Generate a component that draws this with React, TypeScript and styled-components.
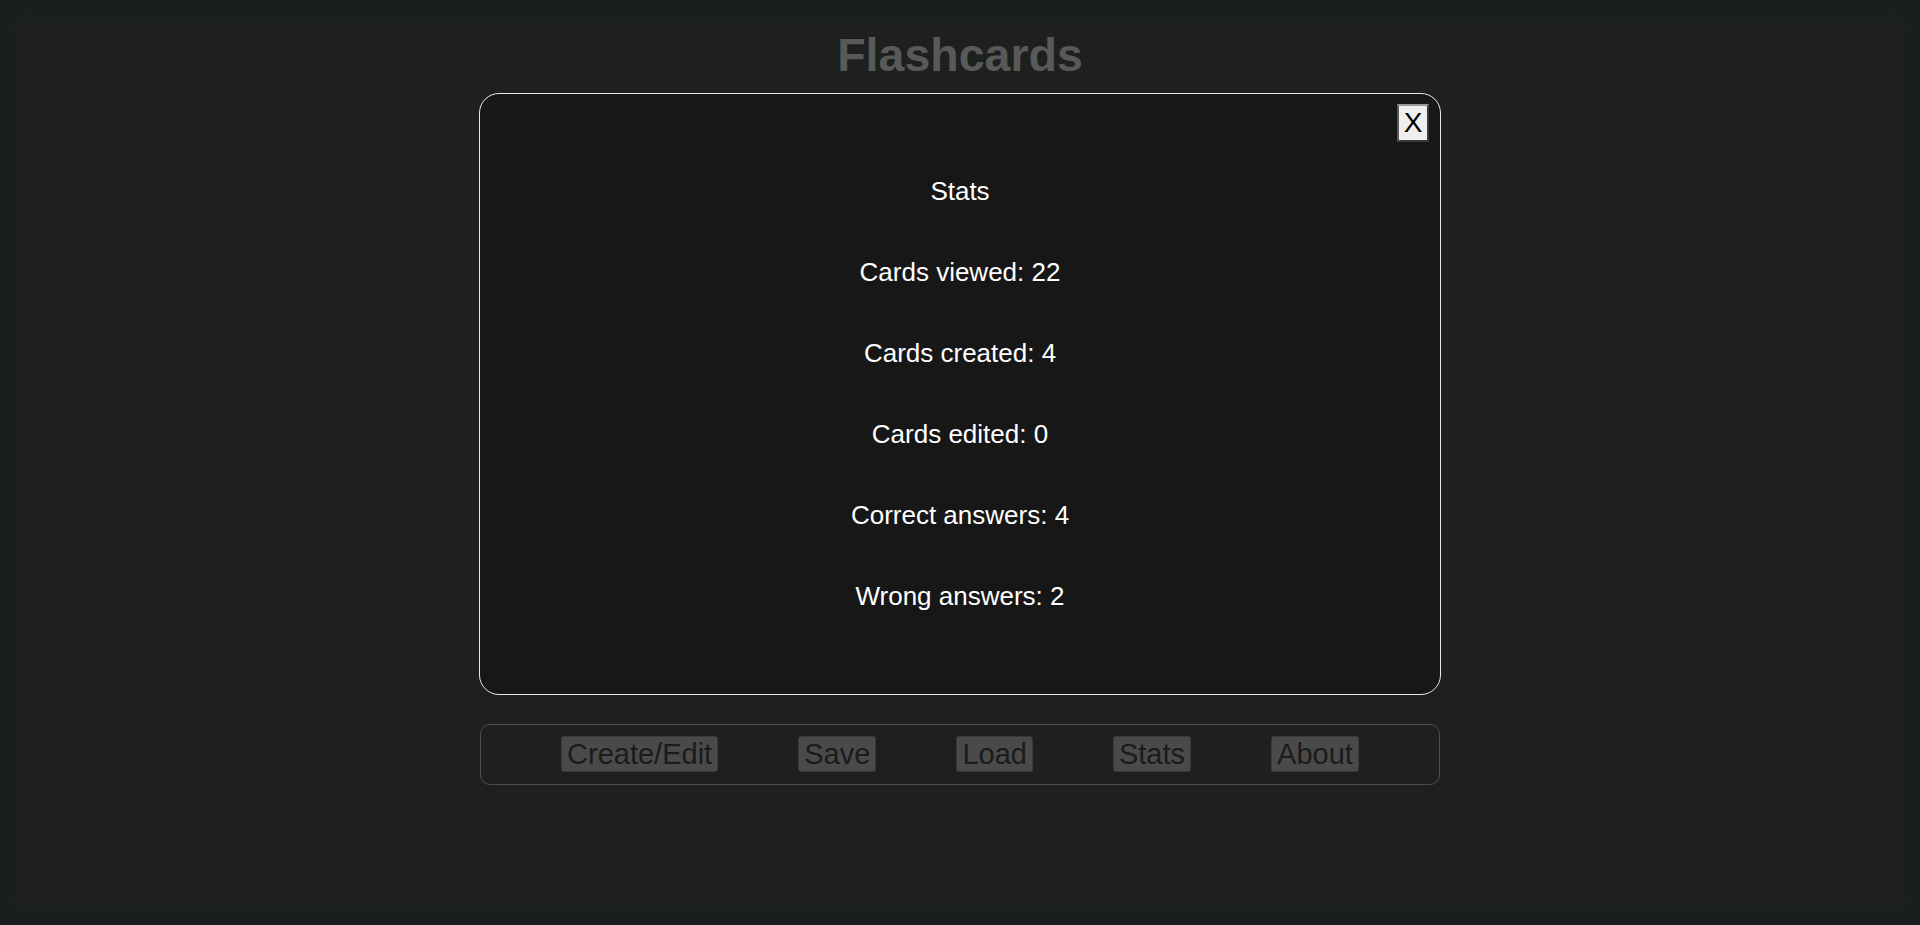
import React from "react";
import styled, { createGlobalStyle } from "styled-components";

const Global = createGlobalStyle`
  html, body { margin: 0; padding: 0; height: 100%; }
  body {
    background: #1e2020;
    font-family: "Liberation Sans", Arial, sans-serif;
    min-height: 925px;
  }
`;

const Page = styled.div`
  width: 100%;
  min-height: 925px;
  display: flex;
  flex-direction: column;
  align-items: center;
  box-shadow: inset 0 0 18px 6px #181e1e;
`;

const Title = styled.h1`
  margin: 27px 0 0;
  height: 56px;
  line-height: 56px;
  font-size: 46.5px;
  font-weight: bold;
  color: #595959;
`;

const Modal = styled.div`
  position: relative;
  box-sizing: border-box;
  width: 962px;
  margin-top: 10px;
  padding: 57px 0 57px;
  background: #171717;
  border: 1px solid #e8e8e8;
  border-radius: 20px;
  display: flex;
  flex-direction: column;
  align-items: center;
`;

const CloseButton = styled.button`
  position: absolute;
  top: 10px;
  right: 11px;
  width: 32px;
  height: 38px;
  padding: 0;
  background: #efefef;
  color: #000;
  border: 2px solid;
  border-color: #9a9a9a #3a3a3a #3a3a3a #5a5a5a;
  font-family: "Liberation Sans", Arial, sans-serif;
  font-size: 28px;
  line-height: 34px;
  cursor: pointer;
`;

const StatRow = styled.p`
  margin: 0;
  height: 81px;
  line-height: 80px;
  font-size: 26px;
  color: #ffffff;
`;

const Bar = styled.div`
  box-sizing: border-box;
  width: 960px;
  height: 61px;
  margin-top: 29px;
  border: 1px solid #4e4e4e;
  border-radius: 10px;
  display: flex;
  align-items: center;
  justify-content: space-evenly;
`;

const NavButton = styled.button`
  height: 36px;
  margin-top: -2px;
  padding: 0 5px;
  background: #4a4a4a;
  color: #1b1b1b;
  border: 1px solid #3a3a3a;
  border-radius: 3px;
  font-family: "Liberation Sans", Arial, sans-serif;
  font-size: 29px;
  line-height: 34px;
`;

const stats = [
  "Stats",
  "Cards viewed: 22",
  "Cards created: 4",
  "Cards edited: 0",
  "Correct answers: 4",
  "Wrong answers: 2",
];

const nav = ["Create/Edit", "Save", "Load", "Stats", "About"];

export default function App() {
  return (
    <>
      <Global />
      <Page>
        <Title>Flashcards</Title>
        <Modal>
          <CloseButton>X</CloseButton>
          {stats.map((s) => (
            <StatRow key={s}>{s}</StatRow>
          ))}
        </Modal>
        <Bar>
          {nav.map((n) => (
            <NavButton key={n}>{n}</NavButton>
          ))}
        </Bar>
      </Page>
    </>
  );
}
